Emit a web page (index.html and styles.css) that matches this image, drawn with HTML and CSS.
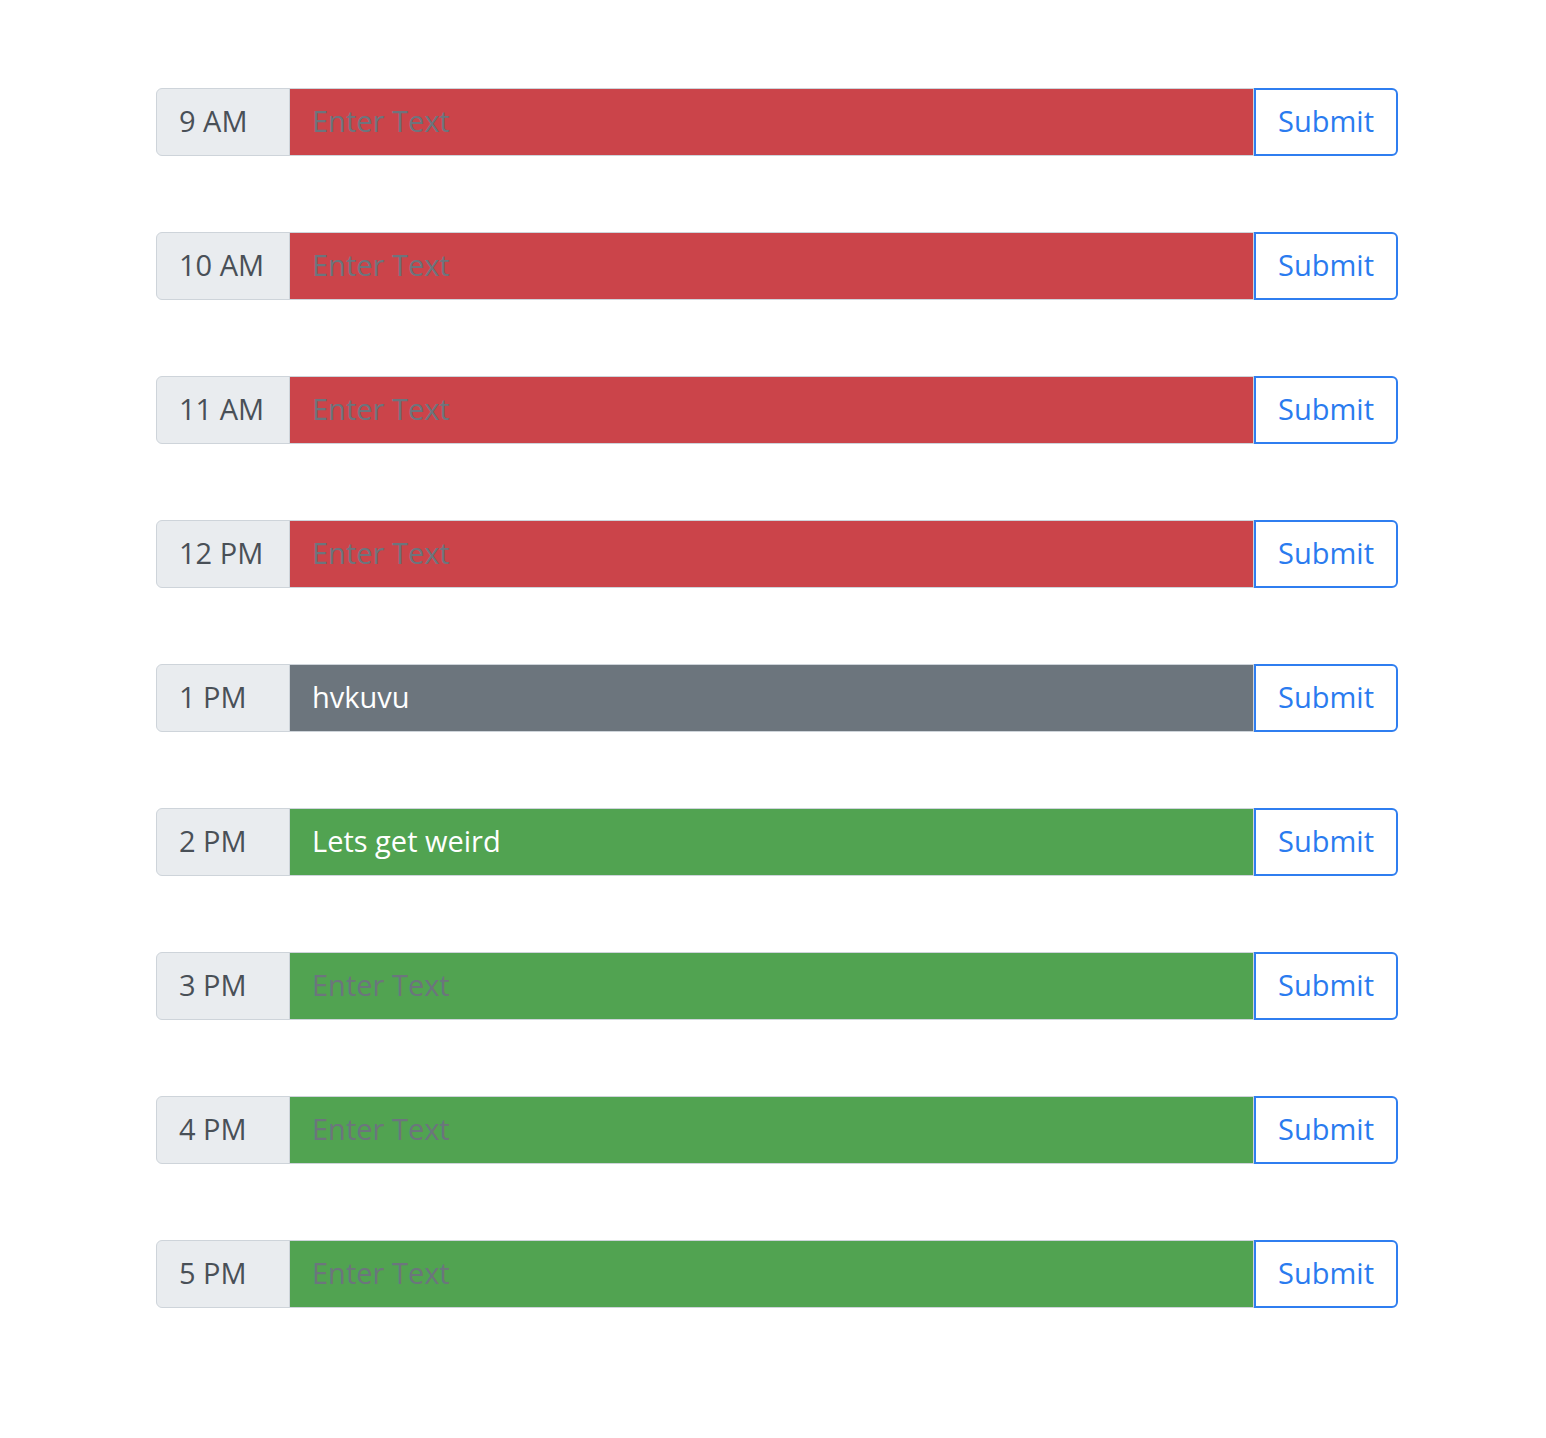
FILE: index.html
```html
<!DOCTYPE html>
<html>
<head>
<meta charset="utf-8">
<link rel="stylesheet" href="styles.css">
</head>
<body>
<div class="planner">
  <div class="row"><span class="hour">9 AM</span><input class="entry past" placeholder="Enter Text"><button class="save">Submit</button></div>
  <div class="row"><span class="hour">10 AM</span><input class="entry past" placeholder="Enter Text"><button class="save">Submit</button></div>
  <div class="row"><span class="hour">11 AM</span><input class="entry past" placeholder="Enter Text"><button class="save">Submit</button></div>
  <div class="row"><span class="hour">12 PM</span><input class="entry past" placeholder="Enter Text"><button class="save">Submit</button></div>
  <div class="row"><span class="hour">1 PM</span><input class="entry present" placeholder="Enter Text" value="hvkuvu"><button class="save">Submit</button></div>
  <div class="row"><span class="hour">2 PM</span><input class="entry future" placeholder="Enter Text" value="Lets get weird"><button class="save">Submit</button></div>
  <div class="row"><span class="hour">3 PM</span><input class="entry future" placeholder="Enter Text"><button class="save">Submit</button></div>
  <div class="row"><span class="hour">4 PM</span><input class="entry future" placeholder="Enter Text"><button class="save">Submit</button></div>
  <div class="row"><span class="hour">5 PM</span><input class="entry future" placeholder="Enter Text"><button class="save">Submit</button></div>
</div>
</body>
</html>
```
FILE: styles.css
```css
* { box-sizing: border-box; }
body {
  margin: 0;
  background: #fff;
  font-family: "Open Sans", "Liberation Sans", sans-serif;
}
.planner {
  margin-left: 156px;
  width: 1242px;
  padding-top: 88px;
  display: flex;
  flex-direction: column;
  gap: 76px;
}
.row {
  display: flex;
  height: 68px;
}
.hour {
  width: 134px;
  flex: none;
  display: flex;
  align-items: center;
  padding-left: 22px;
  padding-bottom: 3px;
  background: #e9ecef;
  border: 1px solid #ced4da;
  border-radius: 6px 0 0 6px;
  color: #495057;
  font-size: 29px;
}
.entry {
  flex: 1;
  min-width: 0;
  margin-left: -1px;
  height: 68px;
  border: 1px solid #ced4da;
  padding: 0 22px 3px 22px;
  font-family: inherit;
  font-size: 29px;
  color: #fff;
  outline: none;
}
.entry::placeholder { color: #6c757d; opacity: 1; }
.past { background: #cb444a; }
.present { background: #6c757d; }
.future { background: #51a351; }
.save {
  width: 144px;
  flex: none;
  height: 68px;
  background: #fff;
  border: 2px solid #2f7ef0;
  border-radius: 0 6px 6px 0;
  color: #2a7bef;
  font-family: inherit;
  font-size: 29px;
  padding: 0 0 3px 0;
}
```
